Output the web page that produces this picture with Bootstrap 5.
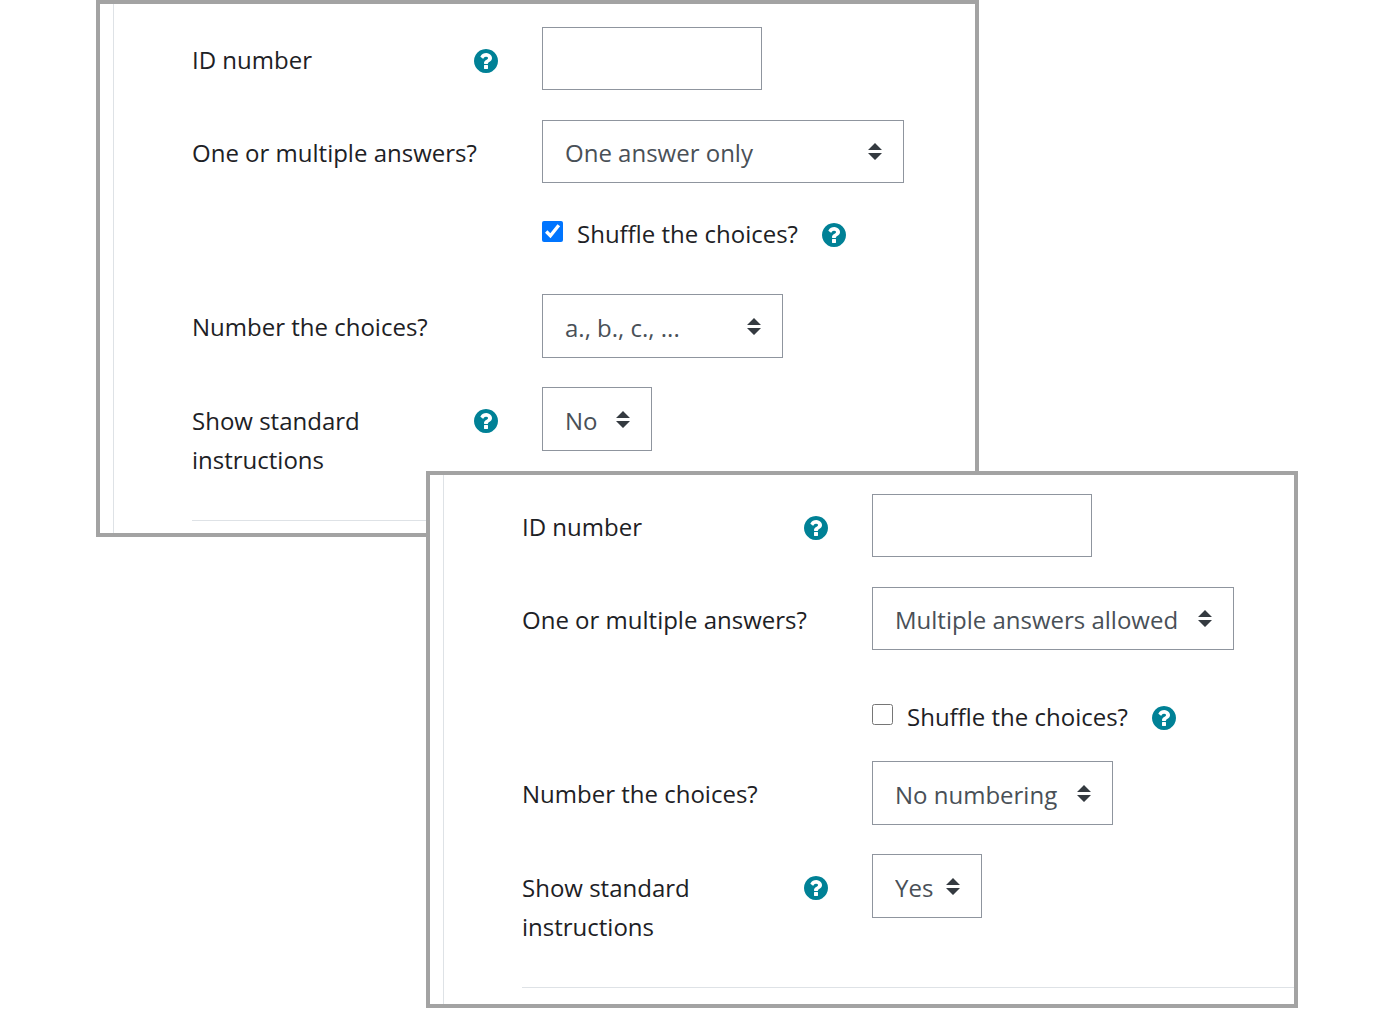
<!DOCTYPE html>
<html lang="en">
<head>
<meta charset="utf-8">
<meta name="viewport" content="width=device-width, initial-scale=1">
<title>Multiple choice question settings</title>
<link href="https://cdn.jsdelivr.net/npm/bootstrap@5.3.0/dist/css/bootstrap.min.css" rel="stylesheet">
<style>
body { font-family: "Open Sans", "Noto Sans", sans-serif; font-size: 24px; line-height: 39px; color: #1d2125; background: #fff; }
.panel { border: 4px solid #a3a3a3; background: #fff; }
.panel-back { margin-left: 96px; margin-right: 397px; }
.panel-front { margin-left: 426px; margin-right: 78px; margin-top: -66px; }
.panel-body { margin-left: 13px; padding: 23px 0 12px 78px; border-left: 1px solid #dee2e6; }
.panel-front .panel-body { padding-top: 19px; padding-bottom: 16px; }
.field { margin-bottom: 30px; }
.field-name { flex: 0 0 350px; padding: 13px 44px 0 0; }
.field-name.wide-name { padding-right: 16px; }
.field-tall { margin-bottom: 29px; }
.field-last { margin-bottom: 41px; }
.field-last .field-name { padding-top: 14px; }
.field-last .help { margin-top: 8px; }
.check-field { min-height: 51px; padding-top: 1px; }
.panel-front .check-field { padding-top: 17px; margin-bottom: 25px; }
.check-field input { width: 21px; height: 21px; margin: 7px 14px 0 0; accent-color: #0075ff; }
.check-field .help { margin-left: 24px; }
.box { height: 63px; border: 1px solid #8f959e; border-radius: 0; color: #495057; font-size: 24px; line-height: 39px; padding: 12px 40px 10px 22px; }
.box-tall { height: 64px; }
.box-text { width: 220px; }
.form-select.box { background: #fff url("data:image/svg+xml,%3Csvg xmlns='http://www.w3.org/2000/svg' viewBox='0 0 14 17'%3E%3Cpath fill='%23343a40' d='M7 0l7 7H0zM7 17l7-7H0z'/%3E%3C/svg%3E") no-repeat right 21px center / 14px 17px; }
.w-answers { width: 362px; }
.w-numbering { width: 241px; }
.w-instructions { width: 110px; }
.help { margin-top: 9px; width: 24px; height: 24px; color: #008196; }
.help svg { display: block; width: 24px; height: 24px; }
.rule { margin: 0; border-top: 1px solid #dee2e6; opacity: 1; }
</style>
<script src="https://cdn.jsdelivr.net/npm/bootstrap@5.3.0/dist/js/bootstrap.bundle.min.js" defer></script>
</head>
<body>
<svg class="d-none" aria-hidden="true">
  <symbol id="question" viewBox="0 0 1536 1536">
    <path fill="currentColor" d="M896 1248v-192q0-14-9-23t-23-9h-192q-14 0-23 9t-9 23v192q0 14 9 23t23 9h192q14 0 23-9t9-23zm256-672q0-88-55.500-163t-138.500-116-170.500-41q-243 0-371 213-15 24 8 42l132 100q7 6 19 6 16 0 25-12 53-68 86-92 34-24 86-24 48 0 85.500 26t37.500 59q0 38-20 61t-68 45q-63 28-115.500 86.500t-52.500 125.500v36q0 14 9 23t23 9h192q14 0 23-9t9-23q0-19 21.500-49.500t54.500-49.500q32-18 49-28.500t46-35 44.500-48 28-60.500 12.500-81zm384 192q0 209-103 385.500t-279.500 279.500-385.500 103-385.500-103-279.500-279.500-103-385.500 103-385.500 279.500-279.500 385.500-103 385.500 103 279.500 279.500 103 385.500z"/>
  </symbol>
</svg>
<main>
  <form class="panel panel-back">
    <div class="panel-body">
      <div class="field d-flex">
        <div class="field-name d-flex justify-content-between"><label for="id1">ID number</label><button type="button" class="help btn p-0 border-0 flex-shrink-0" aria-label="Help with ID number"><svg><use href="#question"/></svg></button></div>
        <input type="text" id="id1" class="form-control box box-text">
      </div>
      <div class="field d-flex">
        <div class="field-name wide-name"><label for="answers1">One or multiple answers?</label></div>
        <select id="answers1" class="form-select box w-answers"><option>One answer only</option><option>Multiple answers allowed</option></select>
      </div>
      <div class="field check-field d-flex">
        <div class="field-name p-0"></div>
        <input type="checkbox" id="shuffle1" checked><label for="shuffle1">Shuffle the choices?</label><button type="button" class="help btn p-0 border-0" aria-label="Help with Shuffle the choices?"><svg><use href="#question"/></svg></button>
      </div>
      <div class="field field-tall d-flex">
        <div class="field-name"><label for="number1">Number the choices?</label></div>
        <select id="number1" class="form-select box box-tall w-numbering"><option>a., b., c., ...</option><option>No numbering</option></select>
      </div>
      <div class="field field-last d-flex">
        <div class="field-name d-flex justify-content-between"><label for="show1">Show standard instructions</label><button type="button" class="help btn p-0 border-0 flex-shrink-0" aria-label="Help with Show standard instructions"><svg><use href="#question"/></svg></button></div>
        <select id="show1" class="form-select box box-tall w-instructions"><option>No</option><option>Yes</option></select>
      </div>
      <hr class="rule">
    </div>
  </form>

  <form class="panel panel-front position-relative">
    <div class="panel-body">
      <div class="field d-flex">
        <div class="field-name d-flex justify-content-between"><label for="id2">ID number</label><button type="button" class="help btn p-0 border-0 flex-shrink-0" aria-label="Help with ID number"><svg><use href="#question"/></svg></button></div>
        <input type="text" id="id2" class="form-control box box-text">
      </div>
      <div class="field d-flex">
        <div class="field-name wide-name"><label for="answers2">One or multiple answers?</label></div>
        <select id="answers2" class="form-select box w-answers"><option>One answer only</option><option selected>Multiple answers allowed</option></select>
      </div>
      <div class="field check-field d-flex">
        <div class="field-name p-0"></div>
        <input type="checkbox" id="shuffle2"><label for="shuffle2">Shuffle the choices?</label><button type="button" class="help btn p-0 border-0" aria-label="Help with Shuffle the choices?"><svg><use href="#question"/></svg></button>
      </div>
      <div class="field field-tall d-flex">
        <div class="field-name"><label for="number2">Number the choices?</label></div>
        <select id="number2" class="form-select box box-tall w-numbering"><option>a., b., c., ...</option><option selected>No numbering</option></select>
      </div>
      <div class="field field-last d-flex">
        <div class="field-name d-flex justify-content-between"><label for="show2">Show standard instructions</label><button type="button" class="help btn p-0 border-0 flex-shrink-0" aria-label="Help with Show standard instructions"><svg><use href="#question"/></svg></button></div>
        <select id="show2" class="form-select box box-tall w-instructions"><option>No</option><option selected>Yes</option></select>
      </div>
      <hr class="rule">
    </div>
  </form>
</main>
</body>
</html>
